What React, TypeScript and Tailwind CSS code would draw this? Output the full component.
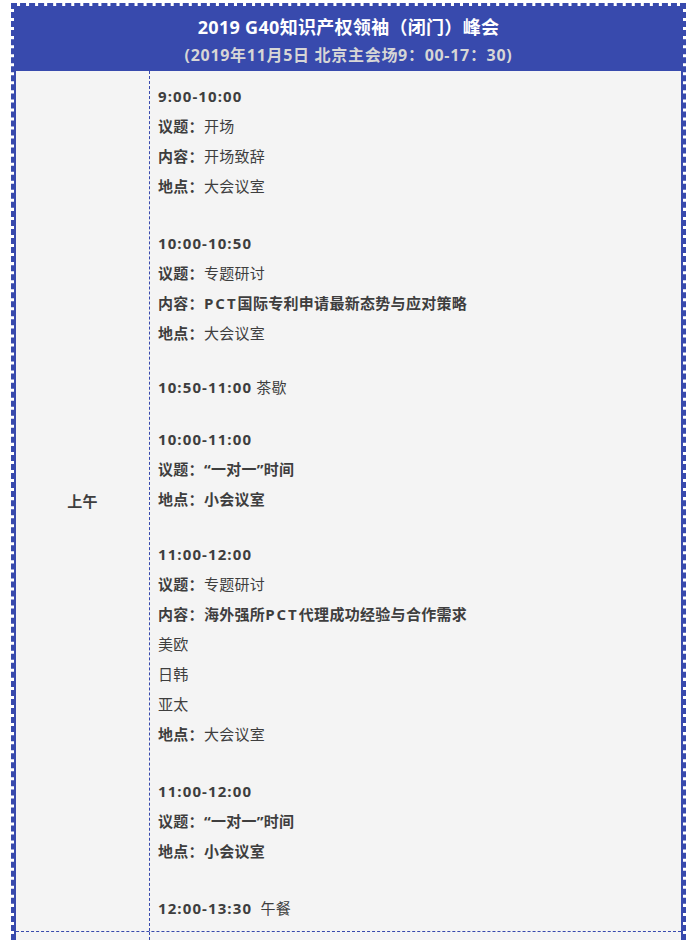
const FONT = { fontFamily: '"Open Sans", "Noto Sans CJK SC", sans-serif' };

type Line = { label?: string; value?: string; bold?: boolean; time?: string; note?: string };
type Block = { mt: string; lines: Line[] };

const BLOCKS: Block[] = [
  {
    mt: "mt-0",
    lines: [
      { time: "9:00-10:00" },
      { label: "议题", value: "开场" },
      { label: "内容", value: "开场致辞" },
      { label: "地点", value: "大会议室" },
    ],
  },
  {
    mt: "mt-[27px]",
    lines: [
      { time: "10:00-10:50" },
      { label: "议题", value: "专题研讨" },
      { label: "内容", value: "PCT国际专利申请最新态势与应对策略", bold: true },
      { label: "地点", value: "大会议室" },
    ],
  },
  {
    mt: "mt-[24px]",
    lines: [{ time: "10:50-11:00", note: " 茶歇" }],
  },
  {
    mt: "mt-[22px]",
    lines: [
      { time: "10:00-11:00" },
      { label: "议题", value: "“一对一”时间", bold: true },
      { label: "地点", value: "小会议室", bold: true },
    ],
  },
  {
    mt: "mt-[25px]",
    lines: [
      { time: "11:00-12:00" },
      { label: "议题", value: "专题研讨" },
      { label: "内容", value: "海外强所PCT代理成功经验与合作需求", bold: true },
      { value: "美欧" },
      { value: "日韩" },
      { value: "亚太" },
      { label: "地点", value: "大会议室" },
    ],
  },
  {
    mt: "mt-[27px]",
    lines: [
      { time: "11:00-12:00" },
      { label: "议题", value: "“一对一”时间", bold: true },
      { label: "地点", value: "小会议室", bold: true },
    ],
  },
  {
    mt: "mt-[27px]",
    lines: [{ time: "12:00-13:30", note: "\u00a0\u00a0午餐" }],
  },
];

// latin runs render wider in the source, so give them extra spacing
function withLatin(text: string) {
  return text.split(/([A-Z]+)/).map((part, i) =>
    /^[A-Z]+$/.test(part) ? (
      <span key={i} className="tracking-[2px]">
        {part}
      </span>
    ) : (
      part
    ),
  );
}

function ScheduleLine({ line }: { line: Line }) {
  if (line.time) {
    return (
      <p className="leading-[30px]">
        <span className="font-bold tracking-[1.1px]">{line.time}</span>
        {line.note && <span>{line.note}</span>}
      </p>
    );
  }
  return (
    <p className="leading-[30px]">
      {line.label && <span className="font-bold">{line.label}：</span>}
      <span className={line.bold ? "font-bold" : ""}>{withLatin(line.value ?? "")}</span>
    </p>
  );
}

export default function App() {
  return (
    <div className="min-h-[940px] bg-white pt-[3px]" style={FONT}>
      <div className="ml-[11px] w-[675px] border-[3px] border-b-0 border-dashed border-[#384aad]">
        <header className="bg-[#384aad] pt-[8px] pb-[2px] text-center">
          <h1 className="text-[18px] font-bold leading-[27px] tracking-[0.3px] text-white">
            2019 G40知识产权领袖（闭门）峰会
          </h1>
          <p className="text-[16px] font-bold leading-[28px] tracking-[0.7px] text-[#d6d6d6]">
            (2019年11月5日 北京主会场9：00-17：30)
          </p>
        </header>

        <div className="border-x-[2px] border-solid border-[#384aad]">
          <div className="flex border-b border-dashed border-[#384aad] bg-[#f4f4f4] text-[15px] tracking-[0.3px] text-[#3e3e3e]">
            <div className="flex w-[134px] shrink-0 items-center justify-center border-r border-dashed border-[#384aad]">
              <span className="font-bold">上午</span>
            </div>
            <div className="flex-1 pt-[10px] pb-[8px] pl-[8px]">
              {BLOCKS.map((block, i) => (
                <div key={i} className={block.mt}>
                  {block.lines.map((line, j) => (
                    <ScheduleLine key={j} line={line} />
                  ))}
                </div>
              ))}
            </div>
          </div>
          <div className="flex h-[8px] bg-[#f4f4f4]">
            <div className="w-[134px] shrink-0 border-r border-dashed border-[#384aad]" />
            <div className="flex-1" />
          </div>
        </div>
      </div>
    </div>
  );
}
